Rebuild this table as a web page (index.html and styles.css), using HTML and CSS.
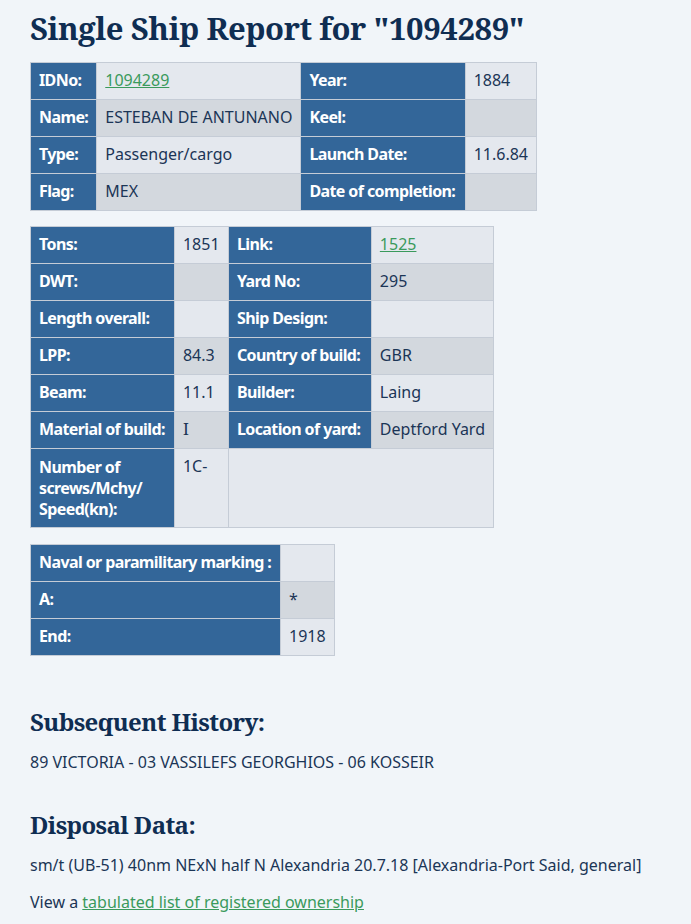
FILE: index.html
```html
<!DOCTYPE html>
<html>
<head>
<meta charset="utf-8">
<link rel="stylesheet" href="styles.css">
</head>
<body>
<main class="page">
  <h1 class="title">Single Ship Report for "1094289"</h1>

  <table class="data t1">
    <tr class="odd">
      <th>IDNo:</th><td><a href="#">1094289</a></td>
      <th>Year:</th><td>1884</td>
    </tr>
    <tr class="even">
      <th>Name:</th><td>ESTEBAN DE ANTUNANO</td>
      <th>Keel:</th><td></td>
    </tr>
    <tr class="odd">
      <th>Type:</th><td>Passenger/cargo</td>
      <th>Launch Date:</th><td>11.6.84</td>
    </tr>
    <tr class="even">
      <th>Flag:</th><td>MEX</td>
      <th>Date of completion:</th><td></td>
    </tr>
  </table>

  <table class="data t2">
    <tr class="odd">
      <th>Tons:</th><td>1851</td>
      <th>Link:</th><td><a href="#">1525</a></td>
    </tr>
    <tr class="even">
      <th>DWT:</th><td></td>
      <th>Yard No:</th><td>295</td>
    </tr>
    <tr class="odd">
      <th>Length overall:</th><td></td>
      <th>Ship Design:</th><td></td>
    </tr>
    <tr class="even">
      <th>LPP:</th><td>84.3</td>
      <th>Country of build:</th><td>GBR</td>
    </tr>
    <tr class="odd">
      <th>Beam:</th><td>11.1</td>
      <th>Builder:</th><td>Laing</td>
    </tr>
    <tr class="even">
      <th>Material of build:</th><td class="serif">I</td>
      <th>Location of yard:</th><td>Deptford Yard</td>
    </tr>
    <tr class="odd">
      <th class="wrap">Number of<br>screws/Mchy/<br>Speed(kn):</th><td>1C-</td>
      <td colspan="2"></td>
    </tr>
  </table>

  <table class="data t3">
    <tr class="odd">
      <th>Naval or paramilitary marking :</th><td></td>
    </tr>
    <tr class="even">
      <th>A:</th><td>*</td>
    </tr>
    <tr class="odd">
      <th>End:</th><td>1918</td>
    </tr>
  </table>

  <h2 class="sub">Subsequent History:</h2>
  <p class="text">89 VICTORIA - 03 VASSILEFS GEORGHIOS - 06 KOSSEIR</p>

  <h2 class="sub disp">Disposal Data:</h2>
  <p class="text">sm/t (UB-51) 40nm NExN half N Alexandria 20.7.18 [Alexandria-Port Said, general]</p>
  <p class="text view">View a <a href="#">tabulated list of registered ownership</a></p>
</main>
</body>
</html>
```

FILE: styles.css
```css
html, body {
  margin: 0;
  padding: 0;
  background: #f1f5f9;
}

.page {
  padding: 0 30px;
  font-family: "Noto Sans", "Open Sans", sans-serif;
  color: #1b3556;
}

.title {
  font-family: "Noto Serif", "DejaVu Serif", serif;
  font-weight: 700;
  font-size: 31px;
  line-height: 40px;
  color: #0f2d52;
  margin: 8px 0 14px;
  letter-spacing: -0.4px;
}

.data {
  border-collapse: collapse;
  border: 1px solid #cfd5dc;
  font-size: 16px;
}

.t1 { margin-bottom: 15px; }
.t2 { margin-bottom: 16px; }

.data th,
.data td {
  height: 37px;
  box-sizing: border-box;
  padding: 7px 8px;
  line-height: 21px;
  border: 1px solid #c5ccd6;
  text-align: left;
  vertical-align: top;
  white-space: nowrap;
}

.data th {
  background: #336699;
  color: #ffffff;
  font-weight: 700;
  letter-spacing: -0.6px;
}

.data tr.odd td { background: #e4e8ee; }
.data tr.even td { background: #d3d8de; }

.data td {
  color: #1b3556;
}

.data a,
.text a {
  color: #3a9a5c;
  text-decoration: underline;
}

.data .serif {
  font-family: "Noto Serif", "DejaVu Serif", serif;
}

.t1 { width: 507px; }
.t1 th:nth-child(1) { width: 66px; }
.t1 td:nth-child(2) { width: 204px; }
.t1 th:nth-child(3) { width: 166px; }

.t2 { width: 464px; }
.t2 tr:first-child th:nth-child(1) { width: 144px; }
.t2 tr:first-child td:nth-child(2) { width: 54px; }
.t2 tr:first-child th:nth-child(3) { width: 143px; }
.t2 th.wrap { white-space: normal; line-height: 21px; padding-top: 8px; }

.t3 { width: 305px; }
.t3 th { width: 250px; }

.sub {
  font-family: "Noto Serif", "DejaVu Serif", serif;
  font-weight: 700;
  font-size: 24px;
  line-height: 32px;
  color: #0f2d52;
  margin: 50px 0 13px;
  letter-spacing: -0.6px;
}

.sub.disp { margin-top: 36px; }

.text {
  font-size: 16px;
  line-height: 22px;
  margin: 0 0 15px;
}
```
